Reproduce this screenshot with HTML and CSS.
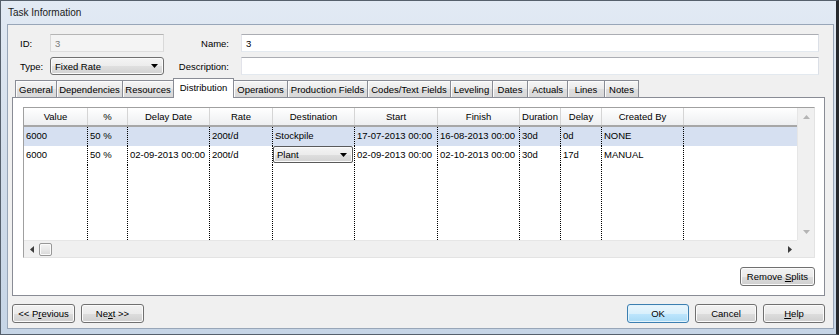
FILE: index.html
```html
<!DOCTYPE html>
<html lang="en">
<head>
    <meta charset="UTF-8">
    <title>Task Information</title>
    <link rel="stylesheet" href="styles.css">
</head>
<body>
    <div class="window">
        <div class="titlebar">Task Information</div>

        <div class="client">
            <div class="fields">
                <div class="field-row">
                    <span class="field-label">ID:</span>
                    <div class="textbox textbox-short textbox-disabled">3</div>
                    <span class="field-label field-label-right">Name:</span>
                    <div class="textbox textbox-wide">3</div>
                </div>
                <div class="field-row">
                    <span class="field-label">Type:</span>
                    <div class="combo combo-type">
                        <span>Fixed Rate</span>
                        <svg width="7" height="4" viewBox="0 0 7 4"><path d="M0 0h7L3.5 4z" fill="#000"/></svg>
                    </div>
                    <span class="field-label field-label-right">Description:</span>
                    <div class="textbox textbox-wide"></div>
                </div>
            </div>

            <div class="tabs">
                <div class="tab">General</div>
                <div class="tab">Dependencies</div>
                <div class="tab">Resources</div>
                <div class="tab tab-active">Distribution</div>
                <div class="tab">Operations</div>
                <div class="tab">Production Fields</div>
                <div class="tab">Codes/Text Fields</div>
                <div class="tab">Leveling</div>
                <div class="tab">Dates</div>
                <div class="tab">Actuals</div>
                <div class="tab">Lines</div>
                <div class="tab">Notes</div>
            </div>

            <div class="tab-panel">
                <div class="grid">
                    <div class="grid-main">
                        <div class="grid-table">
                            <div class="grid-line grid-head">
                                <div class="cell">Value</div>
                                <div class="cell">%</div>
                                <div class="cell">Delay Date</div>
                                <div class="cell">Rate</div>
                                <div class="cell">Destination</div>
                                <div class="cell">Start</div>
                                <div class="cell">Finish</div>
                                <div class="cell">Duration</div>
                                <div class="cell">Delay</div>
                                <div class="cell">Created By</div>
                                <div class="cell"></div>
                            </div>
                            <div class="grid-line grid-row grid-row-selected">
                                <div class="cell">6000</div>
                                <div class="cell">50 %</div>
                                <div class="cell"></div>
                                <div class="cell">200t/d</div>
                                <div class="cell">Stockpile</div>
                                <div class="cell">17-07-2013 00:00</div>
                                <div class="cell">16-08-2013 00:00</div>
                                <div class="cell">30d</div>
                                <div class="cell">0d</div>
                                <div class="cell">NONE</div>
                                <div class="cell"></div>
                            </div>
                            <div class="grid-line grid-row">
                                <div class="cell">6000</div>
                                <div class="cell">50 %</div>
                                <div class="cell">02-09-2013 00:00</div>
                                <div class="cell">200t/d</div>
                                <div class="cell cell-editor">
                                    <div class="combo combo-cell">
                                        <span>Plant</span>
                                        <svg width="7" height="4" viewBox="0 0 7 4"><path d="M0 0h7L3.5 4z" fill="#000"/></svg>
                                    </div>
                                </div>
                                <div class="cell">02-09-2013 00:00</div>
                                <div class="cell">02-10-2013 00:00</div>
                                <div class="cell">30d</div>
                                <div class="cell">17d</div>
                                <div class="cell">MANUAL</div>
                                <div class="cell"></div>
                            </div>
                            <div class="grid-line grid-fill">
                                <div class="cell"></div>
                                <div class="cell"></div>
                                <div class="cell"></div>
                                <div class="cell"></div>
                                <div class="cell"></div>
                                <div class="cell"></div>
                                <div class="cell"></div>
                                <div class="cell"></div>
                                <div class="cell"></div>
                                <div class="cell"></div>
                                <div class="cell"></div>
                            </div>
                        </div>
                        <div class="vscroll">
                            <span class="sb-btn"><svg width="7" height="4" viewBox="0 0 7 4"><path d="M3.5 0L7 4H0z" fill="#b4b4b4"/></svg></span>
                            <span class="sb-btn"><svg width="7" height="4" viewBox="0 0 7 4"><path d="M0 0h7L3.5 4z" fill="#b4b4b4"/></svg></span>
                        </div>
                    </div>
                    <div class="hscroll-line">
                        <div class="hscroll">
                            <span class="sb-btn sb-btn-h"><svg width="4" height="7" viewBox="0 0 4 7"><path d="M4 0v7L0 3.5z" fill="#3c3c3c"/></svg></span>
                            <span class="sb-thumb"></span>
                            <span class="sb-track"></span>
                            <span class="sb-btn sb-btn-h"><svg width="4" height="7" viewBox="0 0 4 7"><path d="M0 0v7l4-3.5z" fill="#3c3c3c"/></svg></span>
                        </div>
                        <div class="sb-corner"></div>
                    </div>
                </div>

                <div class="panel-actions">
                    <button class="btn btn-splits">Remove <u>S</u>plits</button>
                </div>
            </div>

            <div class="footer">
                <div class="button-group">
                    <button class="btn btn-nav">&lt;&lt; P<u>r</u>evious</button>
                    <button class="btn btn-nav">Ne<u>x</u>t &gt;&gt;</button>
                </div>
                <div class="button-group">
                    <button class="btn btn-dialog btn-default">OK</button>
                    <button class="btn btn-dialog">Cancel</button>
                    <button class="btn btn-dialog"><u>H</u>elp</button>
                </div>
            </div>
        </div>
    </div>
</body>
</html>
```

FILE: styles.css
```css
* {
    box-sizing: border-box;
}

body {
    width: 839px;
    height: 335px;
    margin: 0;
    overflow: hidden;
    font-family: "Liberation Sans", Arial, sans-serif;
    font-size: 9.5px;
    color: #000000;
    background: #23272c;
}

.window {
    width: 839px;
    height: 335px;
    display: flex;
    flex-direction: column;
    padding: 0 2px 5px 6px;
    border: 1px solid #56606c;
    border-right: 3px solid #26292d;
    background: linear-gradient(180deg, #e2eaf4 0%, #d3deeb 45%, #c6d5e6 100%);
}

.titlebar {
    height: 23px;
    flex: none;
    display: flex;
    align-items: center;
    padding-left: 1px;
    font-size: 10px;
    color: #1a1a1a;
}

.client {
    flex: 1;
    display: flex;
    flex-direction: column;
    padding: 9px 8px 5px 4px;
    background: #f0f0f0;
    border: 1px solid #98a6b8;
}

/* header fields */

.fields {
    display: flex;
    flex-direction: column;
    gap: 5px;
    padding: 0 6px 0 8px;
}

.field-row {
    display: flex;
    align-items: center;
    height: 18px;
}

.field-label {
    width: 30px;
    flex: none;
}

.field-label-right {
    width: 77px;
    padding-right: 12px;
    text-align: right;
}

.textbox {
    height: 18px;
    display: flex;
    align-items: center;
    padding: 0 4px;
    background: #ffffff;
    border: 1px solid;
    border-color: #abadb3 #dbdfe6 #e3e9ef #e2e3ea;
}

.textbox-short {
    width: 114px;
    flex: none;
}

.textbox-wide {
    flex: 1;
}

.textbox-disabled {
    background: #f4f4f4;
    border-color: #b5b5b5 #d9d9d9 #dedede #d9d9d9;
    color: #7a7a7a;
}

.combo {
    display: flex;
    align-items: center;
    justify-content: space-between;
    border: 1px solid #707070;
    border-radius: 3px;
    background: linear-gradient(180deg, #f4f4f4 0%, #ececec 50%, #dfdfdf 51%, #d2d2d2 100%);
    box-shadow: inset 0 0 0 1px #fbfbfb;
}

.combo-type {
    width: 114px;
    height: 18px;
    flex: none;
    padding: 0 5px 0 4px;
}

.combo-cell {
    width: 80px;
    height: 17px;
    padding: 0 5px 0 3px;
    border-color: #5a5a5a;
    border-radius: 2px;
}

/* tabs */

.tabs {
    height: 19px;
    display: flex;
    align-items: flex-end;
    margin-top: 3px;
    padding-left: 3px;
}

.tab {
    height: 17px;
    display: flex;
    align-items: center;
    justify-content: center;
    border: 1px solid #898c95;
    border-left: none;
    border-bottom: none;
    background: linear-gradient(180deg, #f5f5f5 0%, #ebebeb 50%, #dedede 51%, #d8d8d8 100%);
    box-shadow: inset 1px 1px 0 #fcfcfc;
    white-space: nowrap;
}

.tab:first-child {
    border-left: 1px solid #898c95;
}

.tab-active {
    position: relative;
    z-index: 1;
    height: 20px;
    margin: 0 0 -1px -1px;
    padding-bottom: 2px;
    border-left: 1px solid #898c95;
    background: #ffffff;
    box-shadow: none;
}

.tab:nth-child(1) { width: 42px; }
.tab:nth-child(2) { width: 66px; }
.tab:nth-child(3) { width: 51px; }
.tab:nth-child(4) { width: 61px; }
.tab:nth-child(5) { width: 54px; }
.tab:nth-child(6) { width: 80px; }
.tab:nth-child(7) { width: 83px; }
.tab:nth-child(8) { width: 42px; }
.tab:nth-child(9) { width: 35px; }
.tab:nth-child(10) { width: 40px; }
.tab:nth-child(11) { width: 37px; }
.tab:nth-child(12) { width: 34px; }

.tab-panel {
    height: 199px;
    flex: none;
    display: flex;
    flex-direction: column;
    padding: 9px 9px 9px 10px;
    background: #ffffff;
    border: 1px solid #898c95;
}

/* distribution grid */

.grid {
    height: 151px;
    display: flex;
    flex-direction: column;
    border: 1px solid;
    border-color: #a0a0a0 #e3e3e3 #e3e3e3 #a0a0a0;
}

.grid-main {
    height: 132px;
    display: flex;
}

.grid-table {
    width: 773px;
    display: flex;
    flex-direction: column;
    background: #ffffff;
}

.grid-line {
    display: flex;
}

.grid-line > .cell:nth-child(1) { width: 64px; }
.grid-line > .cell:nth-child(2) { width: 40px; }
.grid-line > .cell:nth-child(3) { width: 82px; }
.grid-line > .cell:nth-child(4) { width: 63px; }
.grid-line > .cell:nth-child(5) { width: 82px; }
.grid-line > .cell:nth-child(6) { width: 83px; }
.grid-line > .cell:nth-child(7) { width: 82px; }
.grid-line > .cell:nth-child(8) { width: 41px; }
.grid-line > .cell:nth-child(9) { width: 41px; }
.grid-line > .cell:nth-child(10) { width: 82px; }
.grid-line > .cell:nth-child(11) { flex: 1; border-right: none; }

.cell {
    flex: none;
    white-space: nowrap;
    overflow: hidden;
}

.grid-head {
    height: 19px;
    background: linear-gradient(180deg, #ffffff 0%, #f6f7f8 50%, #eeeff1 100%);
    border-bottom: 2px solid #a7a7a7;
}

.grid-head .cell {
    line-height: 17px;
    text-align: center;
    border-right: 1px solid #d5d5d5;
}

.grid-row {
    height: 19px;
}

.grid-row .cell,
.grid-fill .cell {
    padding-left: 2px;
    line-height: 18px;
    border-right: 1px dotted #000000;
}

.grid-row-selected {
    background: #d6e0f1;
}

.grid-row .cell-editor {
    padding-left: 0;
}

.grid-fill {
    flex: 1;
}

/* scrollbars */

.vscroll {
    width: 17px;
    display: flex;
    flex-direction: column;
    justify-content: space-between;
    background: #f0f0f0;
    border-left: 1px solid #e6e6e6;
}

.sb-btn {
    height: 17px;
    display: flex;
    align-items: center;
    justify-content: center;
}

.hscroll-line {
    height: 17px;
    display: flex;
}

.hscroll {
    width: 773px;
    display: flex;
    align-items: center;
    background: #f0f0f0;
    border-top: 1px solid #e6e6e6;
}

.sb-btn-h {
    width: 15px;
    height: 16px;
}

.sb-thumb {
    width: 13px;
    height: 13px;
    border: 1px solid #979797;
    border-radius: 2px;
    background: linear-gradient(180deg, #f3f3f3 0%, #e8e8e8 50%, #d8d8d8 100%);
    box-shadow: inset 0 0 0 1px #fafafa;
}

.sb-track {
    flex: 1;
}

.sb-corner {
    flex: 1;
    background: #f0f0f0;
}

/* buttons */

.panel-actions {
    display: flex;
    justify-content: flex-end;
    margin-top: 9px;
}

.btn {
    height: 19px;
    padding: 0;
    font: inherit;
    color: #000000;
    border: 1px solid #707070;
    border-radius: 3px;
    background: linear-gradient(180deg, #f2f2f2 0%, #ebebeb 50%, #dddddd 51%, #cfcfcf 100%);
    box-shadow: inset 0 0 0 1px #fbfbfb;
}

.btn-splits {
    width: 75px;
}

.footer {
    display: flex;
    justify-content: space-between;
    margin-top: 8px;
}

.button-group {
    display: flex;
    gap: 6px;
}

.btn-nav {
    width: 63px;
}

.btn-dialog {
    width: 62px;
}

.btn-default {
    border-color: #3c7fb1;
    background: linear-gradient(180deg, #eaf6fd 0%, #d9f0fc 50%, #bee6fd 51%, #a7d9f5 100%);
    box-shadow: inset 0 0 0 1px #e2f3fc;
}
```
